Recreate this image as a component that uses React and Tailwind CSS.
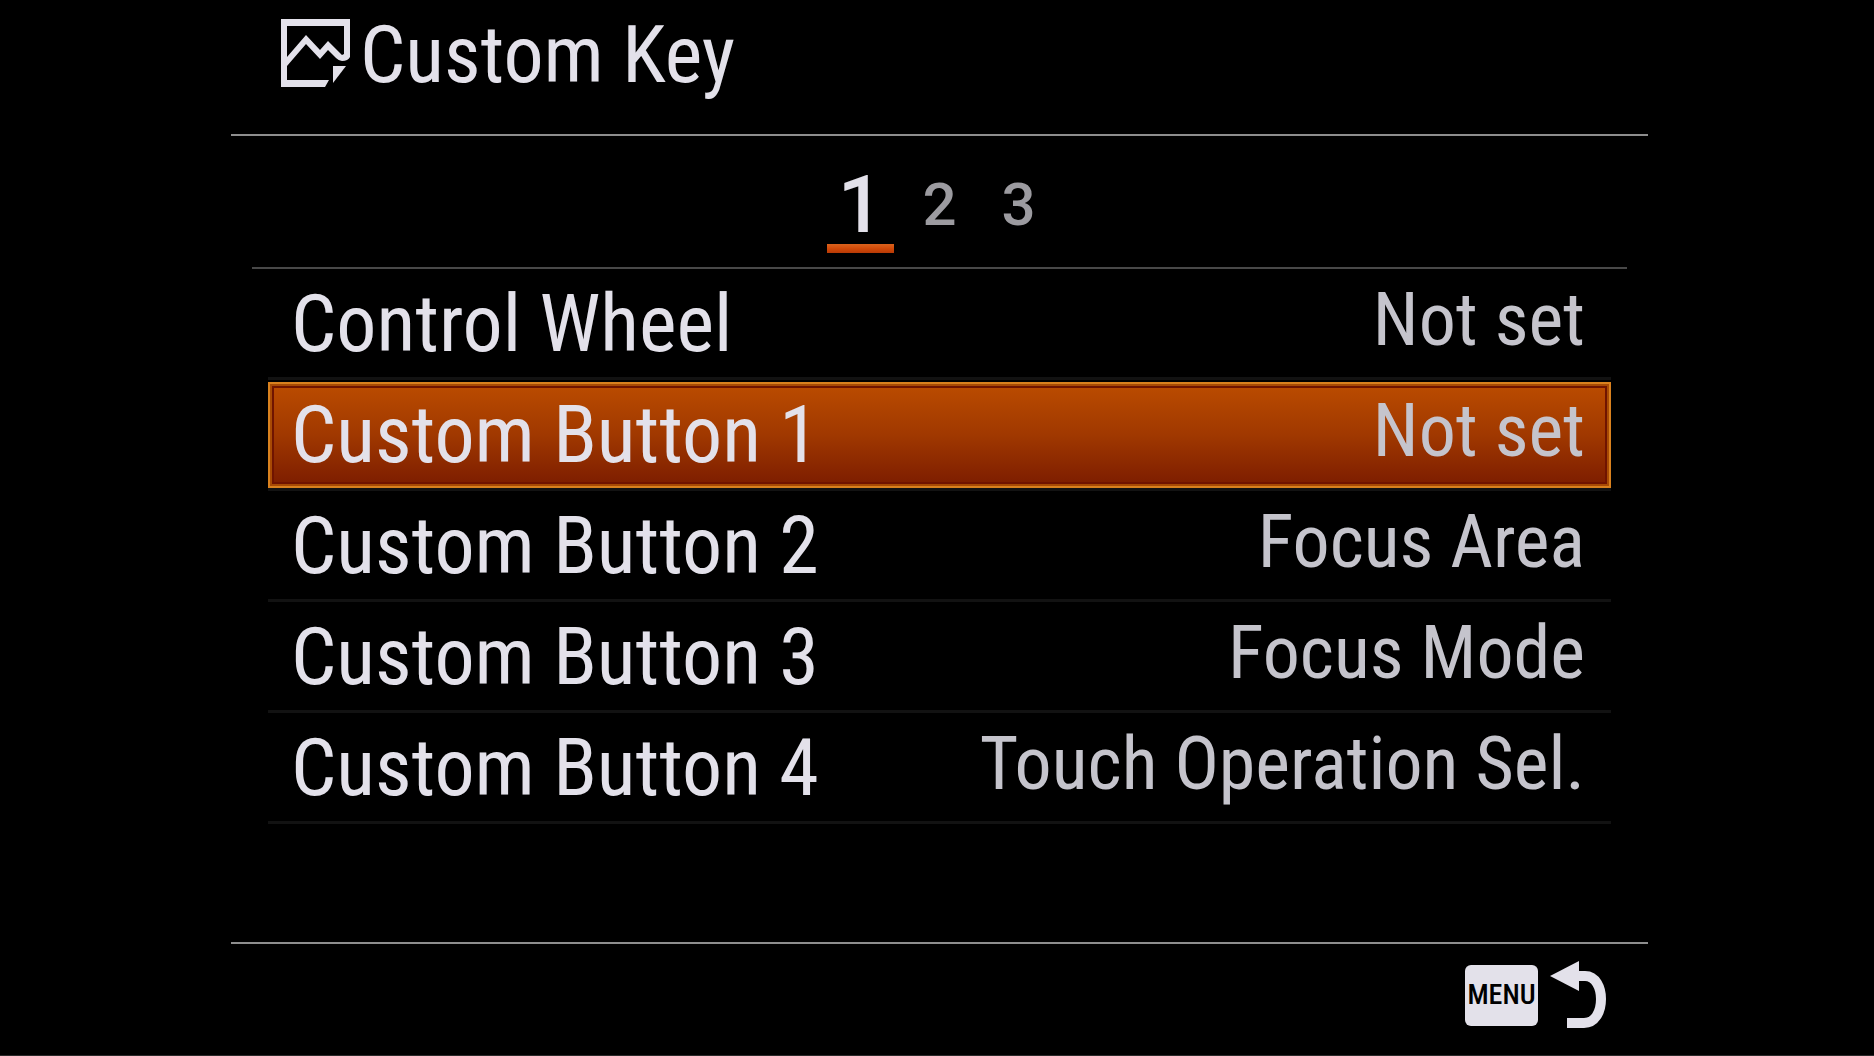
import React, { useState } from "react";
import clsx from "clsx";

const PAGES = [1, 2, 3];

const ITEMS = [
  { label: "Control Wheel", value: "Not set" },
  { label: "Custom Button 1", value: "Not set" },
  { label: "Custom Button 2", value: "Focus Area" },
  { label: "Custom Button 3", value: "Focus Mode" },
  { label: "Custom Button 4", value: "Touch Operation Sel." },
];

// picture frame with a folded bottom right corner
function StillImageIcon() {
  return (
    <svg viewBox="0 0 69 68" className="h-[68px] w-[69px] shrink-0" fill="none" aria-hidden="true">
      <path
        d="M0 0H69V38Q67 42 61 42Q58 42 55 39L47 31L39 40L25 25L6 47V61H48L44 68H0ZM6 7V38L25 16L39 31L47 22L61 36L63 35V7Z"
        fill="#e3e1ea"
        fillRule="evenodd"
      />
      <path d="M52 47H65L52 64Z" fill="#e3e1ea" />
    </svg>
  );
}

function ReturnIcon() {
  return (
    <svg viewBox="0 0 58 68" className="h-[68px] w-[58px] shrink-0" fill="none" aria-hidden="true">
      <path d="M0 15L29 0V30Z" fill="#e3e1ea" />
      <path d="M27 15H35C46 15 51 27 51 38C51 51 45 62 34 62H17" stroke="#e3e1ea" strokeWidth="10" />
    </svg>
  );
}

function PageTab({ page, active, onClick }) {
  return (
    <button type="button" role="tab" aria-selected={active} onClick={onClick} className="w-[67px]">
      <span
        className={clsx(
          "block h-20 font-medium leading-[82px]",
          active ? "text-[80px] text-[#e3e1ea]" : "text-[60px] text-[#9c9ba0]"
        )}
      >
        {page}
      </span>
      <span
        className={clsx(
          "block h-[9px]",
          active && "bg-linear-to-b from-[#d9621c] via-[#d24a08] to-[#b83a06]"
        )}
      />
    </button>
  );
}

function MenuRow({ item, selected, onClick }) {
  return (
    <li className="border-b-3 border-[#121212] pt-0.5">
      <button
        type="button"
        aria-current={selected}
        onClick={onClick}
        className={clsx(
          "flex h-[106px] w-full items-center justify-between border-2 pr-6 pl-[21px] font-['Roboto_Condensed','Liberation_Sans',sans-serif]",
          selected
            ? "border-[#d9811e] bg-linear-to-b from-[#bb4c00] via-[#a03800] to-[#7c1c00] shadow-[inset_0_0_0_2px_#a84a04,inset_0_0_0_4px_#701400]"
            : "border-transparent"
        )}
      >
        <span className="text-[80px] leading-[88px] text-[#e3e1ea]">{item.label}</span>
        <span className="pb-2 text-[74px] leading-[80px] text-[#c5c4cc]">{item.value}</span>
      </button>
    </li>
  );
}

export default function App() {
  const [page, setPage] = useState(1);
  const [selected, setSelected] = useState("Custom Button 1");

  return (
    <div className="flex min-h-screen flex-col border-b border-[#2a2a2a] bg-black pr-[226px] pl-[231px] font-['Roboto','Liberation_Sans',sans-serif]">
      <header className="flex gap-2.5 border-b-2 border-[#8e8e8e] pt-[19px] pb-[47px] pl-[50px]">
        <StillImageIcon />
        <h1 className="h-[68px] font-['Roboto_Condensed','Liberation_Sans',sans-serif] text-[80px] leading-[72px] text-[#e3e1ea]">
          Custom Key
        </h1>
      </header>

      <main className="flex-1">
        <div
          role="tablist"
          aria-label="Page"
          className="mx-[21px] flex justify-center gap-3 border-b-2 border-[#484848] pt-7 pb-3.5"
        >
          {PAGES.map((p) => (
            <PageTab key={p} page={p} active={p === page} onClick={() => setPage(p)} />
          ))}
        </div>

        <ul className="mx-[37px]">
          {ITEMS.map((item) => (
            <MenuRow
              key={item.label}
              item={item}
              selected={item.label === selected}
              onClick={() => setSelected(item.label)}
            />
          ))}
        </ul>
      </main>

      <footer className="flex justify-end border-t-2 border-[#8e8e8e] pt-[17px] pr-[40px] pb-[26px]">
        <button type="button" aria-label="Menu, back" className="flex items-center gap-3">
          <span className="flex h-[61px] w-[73px] items-center justify-center rounded-md bg-[#e3e1ea] font-['Roboto_Condensed','Liberation_Sans',sans-serif] text-[28px] font-medium leading-[36px] text-black">
            MENU
          </span>
          <ReturnIcon />
        </button>
      </footer>
    </div>
  );
}
